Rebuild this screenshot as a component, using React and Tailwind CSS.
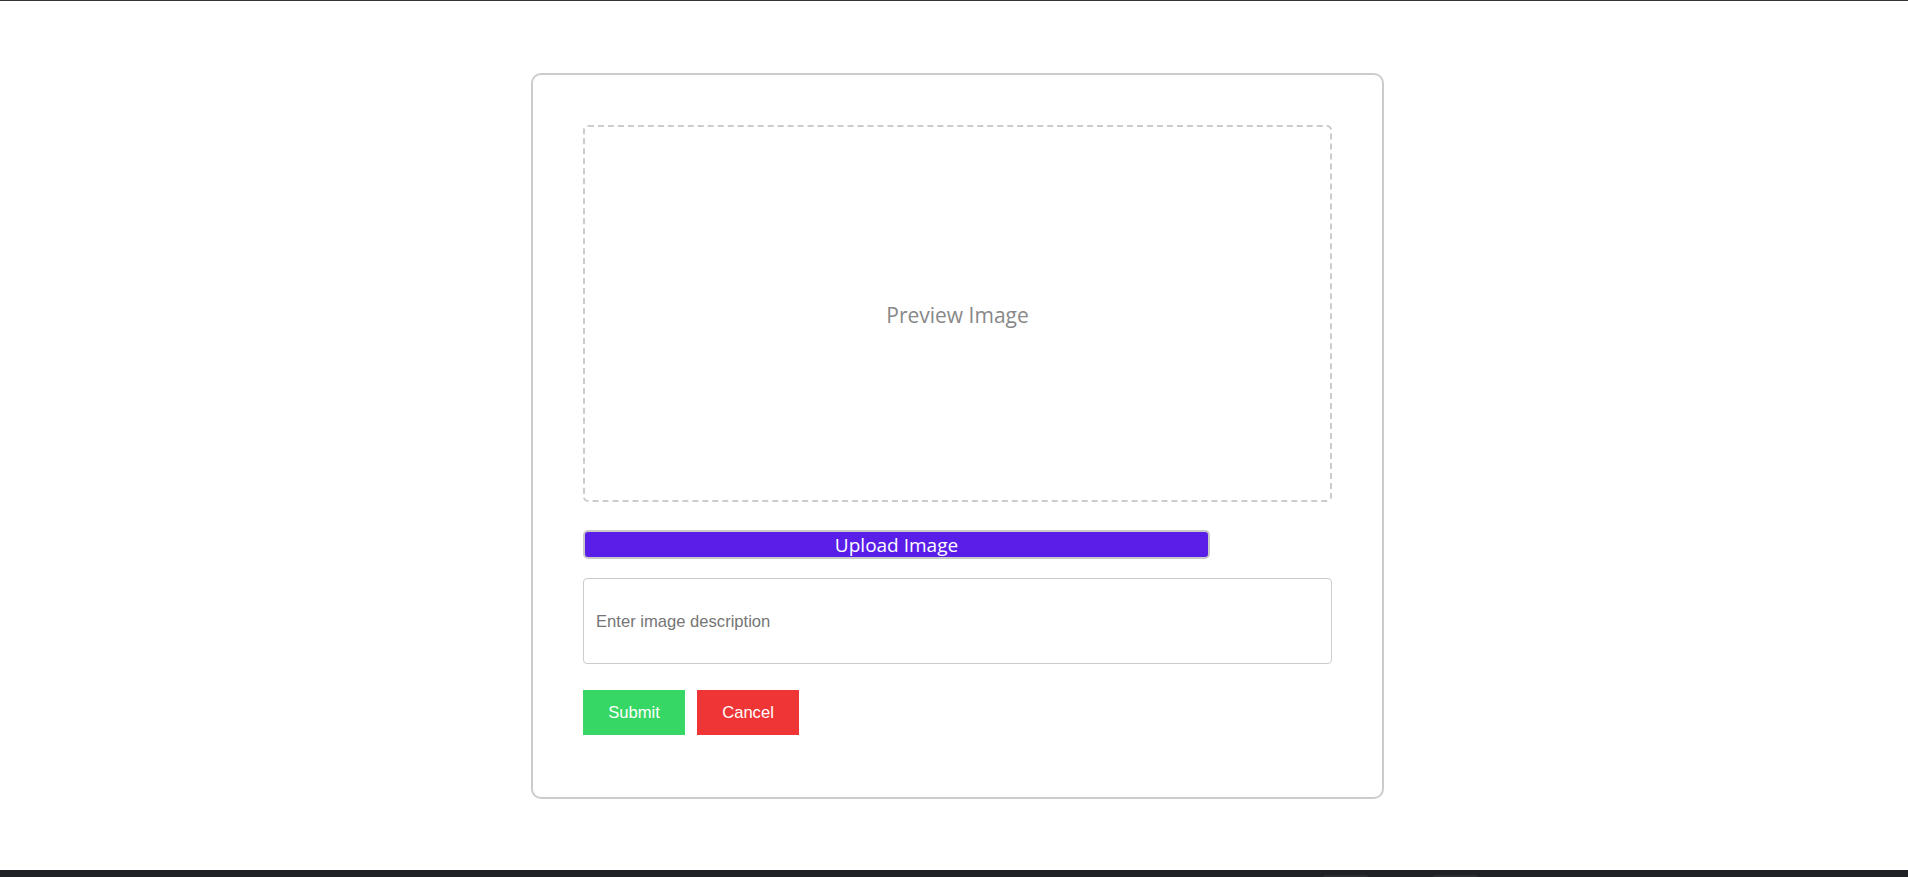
import React, { useState } from 'react';

export default function App() {
    const [description, setDescription] = useState('');

    return (
        <div className="h-[877px] flex flex-col bg-white border-t border-[#333]">
            <div className="flex justify-center pt-[72px] pl-[7px]">
                {/* Card */}
                <div className="w-[853px] border-2 border-[#cccccc] rounded-[10px] px-[50px] pt-[50px] pb-[62px]">
                    <div className="h-[377px] border-2 border-dashed border-[#cccccc] rounded-[5px] flex items-center justify-center">
                        <span className="pt-[5px] text-[21px] text-[#888888] font-['Open_Sans',sans-serif]">Preview Image</span>
                    </div>

                    <button
                        type="button"
                        className="mt-[28px] w-[627px] h-[29px] bg-[#5a1ee9] border-2 border-[#c9c9c9] rounded-[5px] text-white text-[19px] leading-none font-['Open_Sans',sans-serif] flex items-center justify-center"
                    >
                        <span className="pt-[2px]">Upload Image</span>
                    </button>

                    <input
                        type="text"
                        value={description}
                        onChange={(e) => setDescription(e.target.value)}
                        placeholder="Enter image description"
                        className="mt-[19px] block w-full h-[86px] border border-[#cccccc] rounded-[4px] px-[12px] pt-[2px] outline-none text-[16.6px] text-[#333] placeholder:text-[#757575] font-['Liberation_Sans',Arial,sans-serif]"
                    />

                    <div className="mt-[26px] flex gap-[12px]">
                        <button type="button" className="w-[102px] h-[45px] pt-[1px] bg-[#37d766] text-white text-[16.6px] font-['Liberation_Sans',Arial,sans-serif]">
                            Submit
                        </button>
                        <button type="button" className="w-[102px] h-[45px] pt-[1px] bg-[#ef3536] text-white text-[16.6px] font-['Liberation_Sans',Arial,sans-serif]">
                            Cancel
                        </button>
                    </div>
                </div>
            </div>

            <div className="flex-1" />

            {/* bottom bar */}
            <div className="h-[7px] bg-[#202124] flex items-end">
                <div className="ml-[1323px] w-[45px] h-[2px] rounded-t-[3px] bg-[#2c2d31]" />
                <div className="ml-[65px] w-[45px] h-[2px] rounded-t-[3px] bg-[#2c2d31]" />
            </div>
        </div>
    );
}
